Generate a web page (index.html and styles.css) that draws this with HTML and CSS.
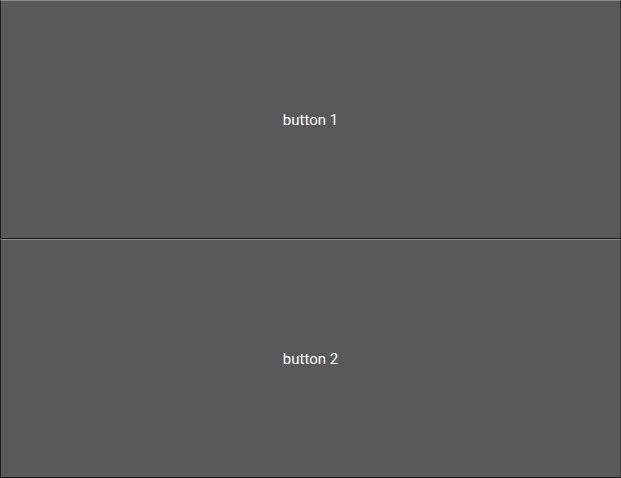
FILE: index.html
```html
<!DOCTYPE html>
<html>
<head>
<meta charset="utf-8">
<link rel="stylesheet" href="styles.css">
</head>
<body>
<div class="stack">
  <button class="btn">button 1</button>
  <button class="btn">button 2</button>
</div>
</body>
</html>
```
FILE: styles.css
```css
html, body {
  margin: 0;
  padding: 0;
  width: 621px;
  height: 478px;
  background: #595959;
  overflow: hidden;
}
.stack {
  display: flex;
  flex-direction: column;
  height: 478px;
}
.btn {
  flex: 1 1 0;
  margin: 0;
  padding: 0;
  background: #595959;
  color: #ffffff;
  font-family: Roboto, "Noto Sans", sans-serif;
  font-size: 15px;
  border-top: 1px solid #8a8a8a;
  border-left: 1px solid #1e1e1e;
  border-right: 1px solid #3a3a3a;
  border-bottom: 1px solid #1a1a1a;
  outline: none;
}
```
